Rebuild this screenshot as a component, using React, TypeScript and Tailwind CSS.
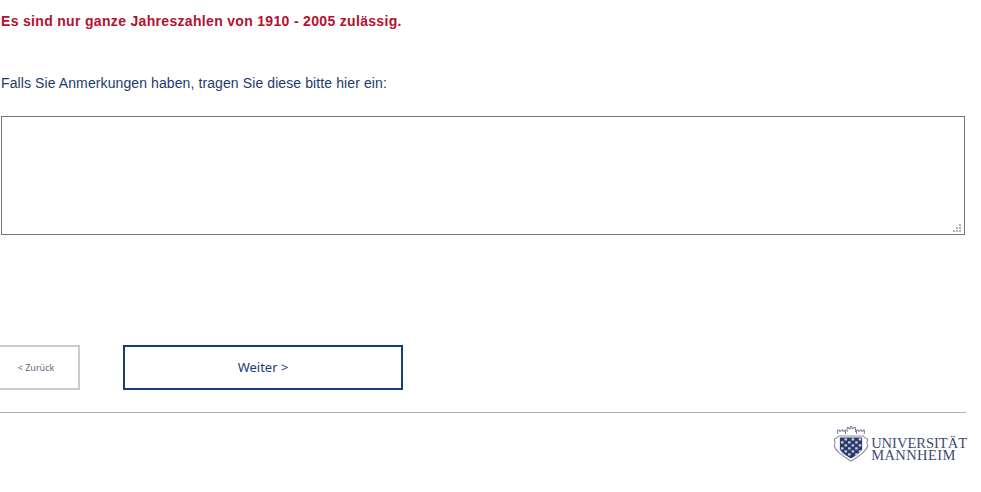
function Logo() {
  const cells = [];
  for (let r = 0; r < 6; r++) {
    for (let c = 0; c < 6; c++) {
      if ((r + c) % 2 === 1) cells.push(<rect key={`${r}-${c}`} x={8.500 + c * 3.2 + 0.4} y={13 + r * 3 + 0.3} width="2.400" height="2.300" rx="0.5" fill="#c9cede" />);
    }
  }
  return (
    <div className="flex items-center">
      <svg width="40" height="38" viewBox="0 0 36 38" preserveAspectRatio="none" className="shrink-0">
        <path d="M6 9V5h1.500v1.200H9V5h1.500v1.200H12V5h1v4M14.500 7V2.500H16v1.200h1.500V1.500H19v2.200h1.500V2.500H22V7M23 9V5h1.500v1.200H26V5h1.500v1.200H29V5h1v4" fill="none" stroke="#6f7690" strokeWidth="0.900" />
        <path d="M7 11h22c1 1.500 2.500 2.500 4 3-1 3-1 4 0 7-1.500 6-8 10-15 15C11 31 4.500 27 3 21c1-3 1-4 0-7 1.500-.5 3-1.500 4-3z" fill="#fff" stroke="#8d93a8" strokeWidth="1.100" />
        <path d="M8 12.500h20v12c-2 4-6 6-10 9-4-3-8-5-10-9z" fill="#2b3a6b" />
        {cells}
      </svg>
      <div className="mt-[10px] font-['Liberation_Serif',serif] text-[#3f4a72] text-[14.500px] leading-[12px]">
        <div>UNIVERSITÄT</div>
        <div className="tracking-[0.400px]">MANNHEIM</div>
      </div>
    </div>
  );
}

export default function App() {
  return (
    <div className="w-[981px] h-[492px] overflow-hidden bg-white font-['Liberation_Sans',sans-serif]">
      <div className="w-[966px] pt-[13px]">
        <p className="pl-px text-[14px] leading-4 font-bold tracking-[0.320px] text-[#b5102e]">
          Es sind nur ganze Jahreszahlen von 1910 - 2005 zulässig.
        </p>
        <p className="pl-px mt-[46px] text-[14px] leading-4 tracking-[0.100px] text-[#1c3a6e]">
          Falls Sie Anmerkungen haben, tragen Sie diese bitte hier ein:
        </p>
        <div className="relative ml-px mt-[25px] w-[964px] h-[119px]">
          <textarea className="block w-full h-full border border-[#767676] bg-white resize-none outline-none" />
          <svg width="9" height="9" viewBox="0 0 9 9" className="absolute right-[3px] bottom-[2px]">
            <path d="M6 0h2v2H6zM3 3h2v2H3zM6 3h2v2H6zM0 6h2v2H0zM3 6h2v2H3zM6 6h2v2H6z" fill="#b4b4b4" />
          </svg>
        </div>
        <div className="flex mt-[110px]">
          <button className="-ml-2 w-[88px] h-[45px] border-2 border-[#cccccc] bg-white text-[9px] text-[#5c6580] font-['Noto_Sans',sans-serif]">
            &lt; Zurück
          </button>
          <button className="ml-[43px] w-[280px] h-[45px] border-2 border-[#1a3a7c] bg-white text-[13px] text-[#1a3a7c] font-['Noto_Sans',sans-serif]">
            Weiter &gt;
          </button>
        </div>
        <div className="mt-[22px] border-t border-[#b0b0b0]" />
      </div>
      <div className="w-[967px] mt-[12px] flex justify-end">
        <Logo />
      </div>
    </div>
  );
}
